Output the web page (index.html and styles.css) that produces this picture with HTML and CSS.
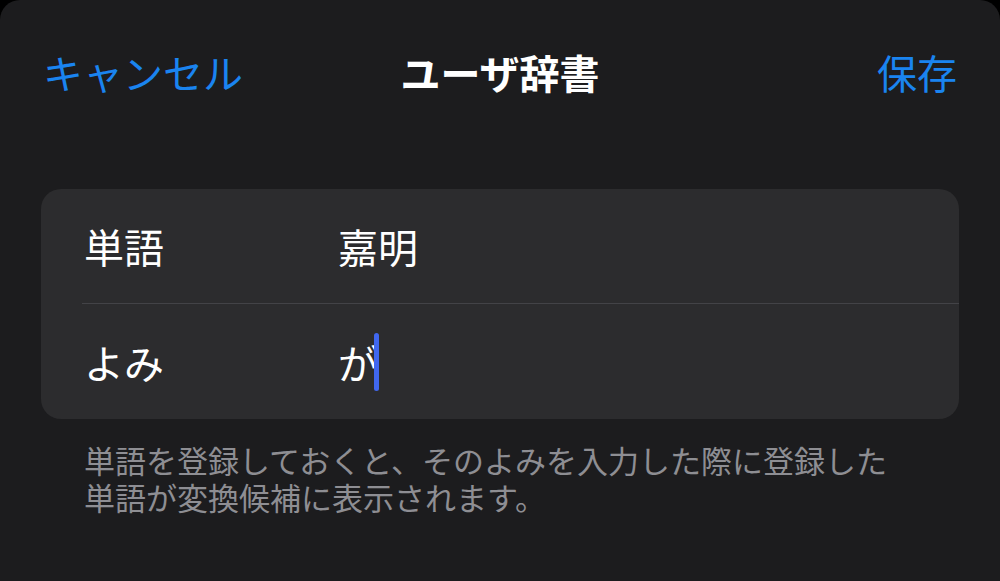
FILE: index.html
```html
<!DOCTYPE html>
<html lang="ja">
<head>
<meta charset="utf-8">
<link rel="stylesheet" href="styles.css">
</head>
<body>
<div class="sheet">
  <header class="nav">
    <span class="nav-btn">キャンセル</span>
    <span class="nav-title">ユーザ辞書</span>
    <span class="nav-btn">保存</span>
  </header>
  <section class="card">
    <div class="row">
      <span class="label">単語</span>
      <span class="value">嘉明</span>
    </div>
    <div class="sep"></div>
    <div class="row">
      <span class="label">よみ</span>
      <span class="value">が<span class="caret"></span></span>
    </div>
  </section>
  <p class="note">単語を登録しておくと、そのよみを入力した際に登録した<br>単語が変換候補に表示されます。</p>
</div>
</body>
</html>
```

FILE: styles.css
```css
html, body {
  margin: 0;
  padding: 0;
  background: #000;
  width: 1000px;
  height: 581px;
  overflow: hidden;
}
body {
  font-family: "Noto Sans CJK JP", "Noto Sans", sans-serif;
  color: #fff;
}
.sheet {
  background: #1c1c1e;
  height: 581px;
  border-radius: 20px 20px 0 0;
  box-sizing: border-box;
  padding-top: 48px;
}
.nav {
  display: flex;
  justify-content: space-between;
  align-items: center;
  padding: 0 43px;
  height: 48px;
  position: relative;
}
.nav-btn {
  color: #1a84f0;
  font-size: 40px;
  line-height: 48px;
}
.nav-title {
  position: absolute;
  left: 0;
  right: 0;
  text-align: center;
  font-size: 40px;
  font-weight: 700;
  line-height: 48px;
  pointer-events: none;
}
.card {
  margin: 93px 41px 0;
  background: #2c2c2e;
  border-radius: 20px;
  overflow: hidden;
}
.row {
  display: flex;
  align-items: center;
  height: 114px;
  padding-left: 43px;
  font-size: 40px;
}
.row + .sep + .row {
  height: 115px;
}
.sep {
  height: 1px;
  margin-left: 41px;
  background: #434347;
}
.label {
  width: 254px;
  flex: none;
}
.value {
  display: flex;
  align-items: center;
}
.caret {
  display: inline-block;
  width: 5px;
  height: 58px;
  margin-left: -4px;
  background: #4067ef;
  border-radius: 3px;
}
.note {
  margin: 22px 0 0 84px;
  font-size: 31px;
  line-height: 37px;
  color: #8e8e93;
}
```
